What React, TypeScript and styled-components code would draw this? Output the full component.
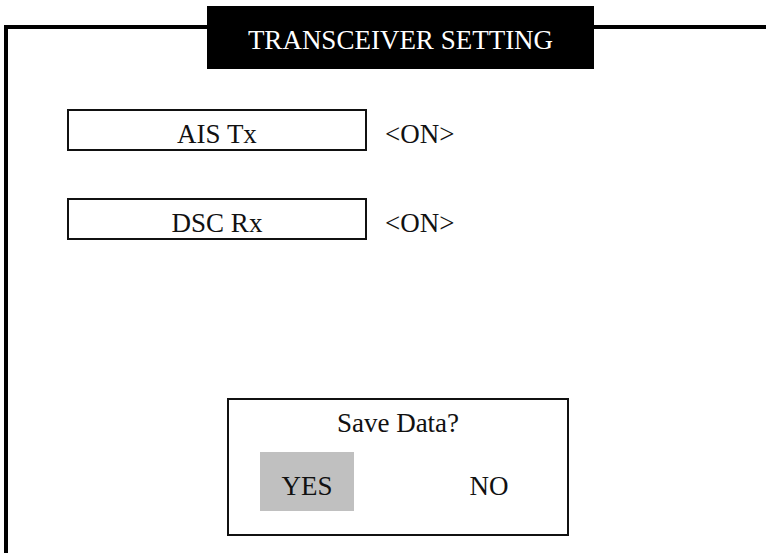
import styled, { createGlobalStyle } from 'styled-components'

const serif = `"Times New Roman", "Liberation Serif", Tinos, "DejaVu Serif", serif`

const GlobalStyle = createGlobalStyle`
  html, body {
    margin: 0;
    padding: 0;
    background: #fff;
  }
  body {
    font-family: ${serif};
    color: #111;
  }
`

const Screen = styled.div`
  position: relative;
  width: 766px;
  height: 553px;
  overflow: hidden;
  background: #fff;
  font-family: ${serif};
`

const Frame = styled.div`
  margin: 25px 0 0 4px;
  height: 540px;
  border-left: 4px solid #000;
  border-top: 4px solid #000;
  padding: 80px 0 0 59px;
  box-sizing: border-box;
`

const Title = styled.div`
  position: absolute;
  left: 207px;
  top: 6px;
  width: 387px;
  height: 63px;
  box-sizing: border-box;
  padding-top: 6px;
  background: #000;
  color: #fff;
  font-size: 27px;
  line-height: 57px;
  text-align: center;
  white-space: nowrap;
`

const Rows = styled.div`
  display: flex;
  flex-direction: column;
  gap: 47px;
`

const Row = styled.div`
  display: flex;
  align-items: flex-start;
  gap: 18px;
`

const Label = styled.div`
  width: 300px;
  height: 42px;
  box-sizing: border-box;
  border: 2px solid #111;
  padding-top: 8px;
  font-size: 27px;
  line-height: 30px;
  text-align: center;
`

const Value = styled.div`
  padding-top: 10px;
  font-size: 27px;
  line-height: 30px;
`

const Dialog = styled.div`
  margin: 158px 0 0 160px;
  width: 342px;
  height: 138px;
  box-sizing: border-box;
  border: 2px solid #111;
  padding: 8px 31px 0;
  display: flex;
  flex-direction: column;
  gap: 13px;
`

const Question = styled.div`
  font-size: 27px;
  line-height: 31px;
  text-align: center;
`

const Buttons = styled.div`
  display: flex;
  justify-content: space-between;
`

const Choice = styled.div<{ $selected?: boolean }>`
  width: 94px;
  height: 59px;
  box-sizing: border-box;
  padding-top: 9px;
  font-size: 27px;
  line-height: 50px;
  text-align: center;
  background: ${p => (p.$selected ? '#c0c0c0' : 'transparent')};
`

const settings = [
  { name: 'AIS Tx', value: '<ON>' },
  { name: 'DSC Rx', value: '<ON>' },
]

export default function App() {
  return (
    <>
      <GlobalStyle />
      <Screen>
        <Frame>
          <Rows>
            {settings.map(s => (
              <Row key={s.name}>
                <Label>{s.name}</Label>
                <Value>{s.value}</Value>
              </Row>
            ))}
          </Rows>
          <Dialog>
            <Question>Save Data?</Question>
            <Buttons>
              <Choice $selected>YES</Choice>
              <Choice>NO</Choice>
            </Buttons>
          </Dialog>
        </Frame>
        <Title>TRANSCEIVER SETTING</Title>
      </Screen>
    </>
  )
}
